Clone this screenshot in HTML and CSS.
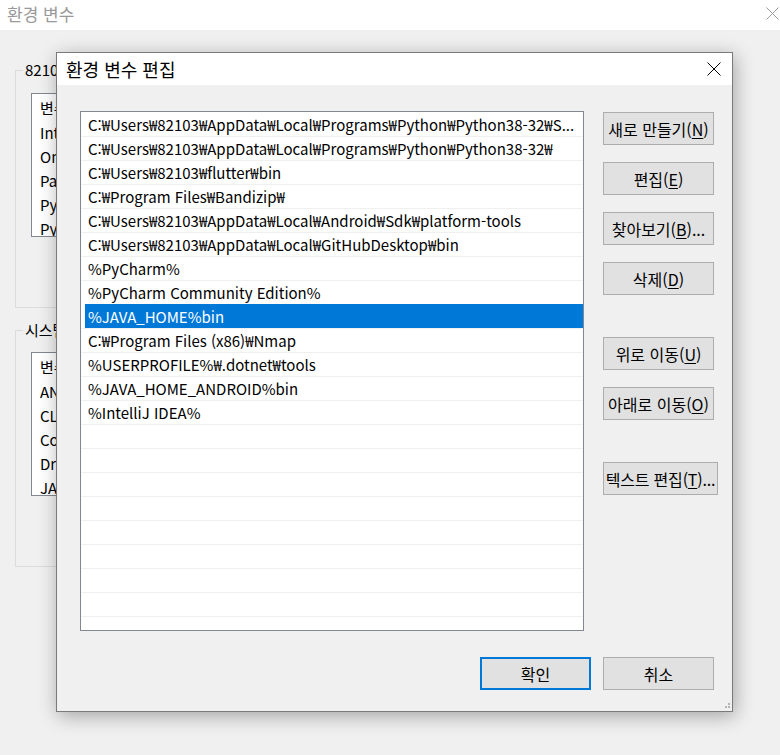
FILE: index.html
```html
<!DOCTYPE html>
<html lang="ko">
<head>
<meta charset="utf-8">
<title>환경 변수 편집</title>
<link rel="stylesheet" href="styles.css">
</head>
<body>
<div class="bgwin">
  <div class="bg-title">
    <span class="bg-title-text">환경 변수</span>
    <svg class="bg-close" width="13" height="13" viewBox="0 0 13 13"><path d="M0.5 0.5L12.5 12.5M12.5 0.5L0.5 12.5" stroke="#9a9a9a" stroke-width="1" fill="none"/></svg>
  </div>
  <div class="bg-body">
    <div class="group g1">
      <span class="group-label">82103에 대한 사용자 변수(U)</span>
      <div class="bg-list">
        <div class="bg-head">변수</div>
        <div class="bg-item">IntelliJ IDEA</div>
        <div class="bg-item">OneDrive</div>
        <div class="bg-item">Path</div>
        <div class="bg-item">PyCharm</div>
        <div class="bg-item">PyCharm Community Edition</div>
      </div>
    </div>
    <div class="group g2">
      <span class="group-label">시스템 변수(S)</span>
      <div class="bg-list">
        <div class="bg-head">변수</div>
        <div class="bg-item">ANDROID_HOME</div>
        <div class="bg-item">CLASSPATH</div>
        <div class="bg-item">ComSpec</div>
        <div class="bg-item">DriverData</div>
        <div class="bg-item">JAVA_HOME</div>
      </div>
    </div>
  </div>
</div>

<div class="dialog">
  <div class="dlg-title">
    <span class="dlg-title-text">환경 변수 편집</span>
    <svg class="dlg-close" width="14" height="14" viewBox="0 0 14 14"><path d="M0.5 0.5L13.5 13.5M13.5 0.5L0.5 13.5" stroke="#000" stroke-width="1" fill="none"/></svg>
  </div>
  <div class="dlg-body">
    <div class="dlg-main">
      <div class="path-list">
        <div class="row">C:₩Users₩82103₩AppData₩Local₩Programs₩Python₩Python38-32₩S...</div>
        <div class="row">C:₩Users₩82103₩AppData₩Local₩Programs₩Python₩Python38-32₩</div>
        <div class="row">C:₩Users₩82103₩flutter₩bin</div>
        <div class="row">C:₩Program Files₩Bandizip₩</div>
        <div class="row">C:₩Users₩82103₩AppData₩Local₩Android₩Sdk₩platform-tools</div>
        <div class="row">C:₩Users₩82103₩AppData₩Local₩GitHubDesktop₩bin</div>
        <div class="row">%PyCharm%</div>
        <div class="row">%PyCharm Community Edition%</div>
        <div class="row sel">%JAVA_HOME%bin</div>
        <div class="row">C:₩Program Files (x86)₩Nmap</div>
        <div class="row">%USERPROFILE%₩.dotnet₩tools</div>
        <div class="row">%JAVA_HOME_ANDROID%bin</div>
        <div class="row">%IntelliJ IDEA%</div>
        <div class="row"></div>
        <div class="row"></div>
        <div class="row"></div>
        <div class="row"></div>
        <div class="row"></div>
        <div class="row"></div>
        <div class="row"></div>
        <div class="row"></div>
        <div class="row"></div>
      </div>
      <div class="side">
        <button class="btn">새로 만들기(<u>N</u>)</button>
        <button class="btn">편집(<u>E</u>)</button>
        <button class="btn">찾아보기(<u>B</u>)...</button>
        <button class="btn">삭제(<u>D</u>)</button>
        <button class="btn far">위로 이동(<u>U</u>)</button>
        <button class="btn">아래로 이동(<u>O</u>)</button>
        <button class="btn far wide">텍스트 편집(<u>T</u>)...</button>
      </div>
    </div>
    <div class="dlg-foot">
      <button class="btn primary">확인</button>
      <button class="btn">취소</button>
    </div>
  </div>
  <svg class="grip" width="10" height="7" viewBox="0 0 10 7">
    <rect x="7" y="0" width="2" height="2" fill="#b4b4b4"/>
    <rect x="4" y="3" width="2" height="2" fill="#b4b4b4"/>
    <rect x="7" y="3" width="2" height="2" fill="#b4b4b4"/>
  </svg>
</div>
</body>
</html>
```

FILE: styles.css
```css
* { box-sizing: border-box; }

html, body {
  margin: 0;
  padding: 0;
}

body {
  width: 780px;
  height: 755px;
  overflow: hidden;
  background: #f0f0f0;
  font-family: "Noto Sans CJK KR", "Noto Sans", sans-serif;
  font-size: 15px;
  color: #000;
  position: relative;
}

/* ---------- background window ---------- */
.bgwin {
  width: 780px;
  height: 755px;
}

.bg-title {
  height: 30px;
  background: #fff;
  display: flex;
  align-items: center;
  justify-content: space-between;
  padding: 0 1px 0 7px;
}

.bg-title-text {
  color: #999;
  font-size: 17px;
  line-height: 22px;
  margin-top: -2px;
}

.bg-close {
  margin-top: -4px;
}

.bg-body {
  padding: 40px 0 0 15px;
}

.group {
  position: relative;
  width: 600px;
  border: 1px solid #dcdcdc;
  padding: 22px 0 70px 15px;
}

.g2 {
  margin-top: 22px;
  padding-top: 21px;
}

.group-label {
  position: absolute;
  top: -11px;
  left: 7px;
  padding: 0 2px;
  background: #f0f0f0;
  line-height: 20px;
  white-space: nowrap;
}

.bg-list {
  width: 400px;
  height: 144px;
  background: #fff;
  border: 1px solid #828790;
  overflow: hidden;
  padding-left: 8px;
}

.bg-head {
  height: 27px;
  line-height: 27px;
}

.bg-item {
  height: 24px;
  line-height: 24px;
  white-space: nowrap;
}

/* ---------- dialog ---------- */
.dialog {
  position: absolute;
  left: 56px;
  top: 52px;
  width: 677px;
  height: 660px;
  border: 1px solid #7a7a7a;
  background: #f0f0f0;
  box-shadow: 2px 4px 18px rgba(0, 0, 0, 0.32);
}

.dlg-title {
  height: 32px;
  background: #fff;
  display: flex;
  align-items: center;
  justify-content: space-between;
  padding: 0 11px 0 9px;
}

.dlg-title-text {
  font-size: 18px;
  line-height: 22px;
}

.dlg-body {
  padding: 26px 0 0 23px;
}

.dlg-main {
  display: flex;
  gap: 19px;
}

.path-list {
  width: 504px;
  height: 520px;
  flex: none;
  background: #fff;
  border: 1px solid #828790;
  overflow: hidden;
}

.row {
  height: 24px;
  line-height: 23px;
  border-top: 1px solid #f0f0f0;
  padding-left: 7px;
  white-space: nowrap;
  overflow: hidden;
}

.row:first-child {
  border-top-color: #fff;
}

.row.sel {
  color: #fff;
  border-top-color: transparent;
  background: linear-gradient(to right, #fff 0, #fff 4px, #0078d7 4px, #0078d7 100%);
  background-origin: border-box;
  background-clip: border-box;
}

.side {
  width: 111px;
  flex: none;
  display: flex;
  flex-direction: column;
  gap: 17px;
  padding-top: 1px;
}

.btn {
  width: 111px;
  height: 33px;
  flex: none;
  background: #e1e1e1;
  border: 1px solid #adadad;
  border-radius: 0;
  padding: 0;
  margin: 0;
  font-family: "Noto Sans CJK KR", "Noto Sans", sans-serif;
  font-size: 16px;
  line-height: 20px;
  color: #000;
  white-space: nowrap;
  text-align: center;
}

.btn u {
  text-decoration-thickness: 1px;
  text-underline-offset: 2px;
}

.btn.far {
  margin-top: 25px;
}

.btn.wide {
  width: 115px;
  letter-spacing: -0.2px;
}

.dlg-foot {
  width: 634px;
  margin-top: 26px;
  display: flex;
  justify-content: flex-end;
  gap: 12px;
}

.btn.primary {
  border: 2px solid #0078d7;
}

.grip {
  position: absolute;
  right: 1px;
  bottom: 1px;
}
```
